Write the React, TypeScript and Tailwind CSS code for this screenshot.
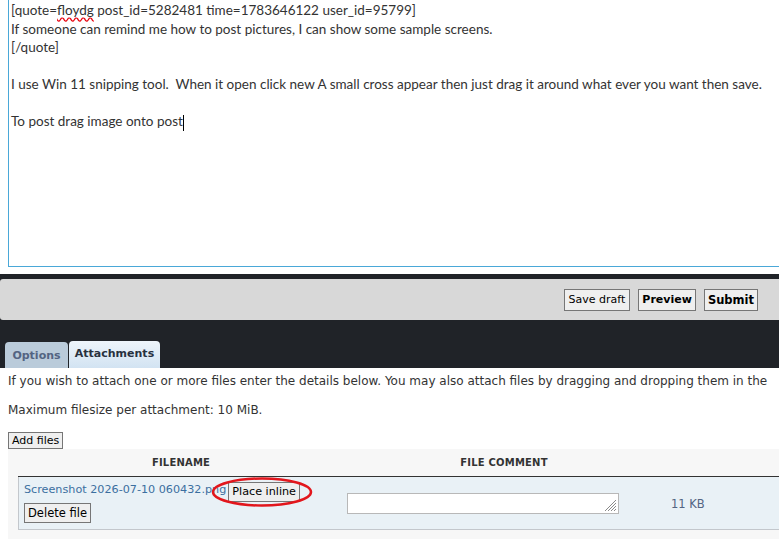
import React from 'react';

const editorFont = { fontFamily: 'Lato, "Liberation Sans", sans-serif' };
const uiFont = { fontFamily: '"DejaVu Sans", Verdana, sans-serif' };

function Btn({ children, bold = false, className = '' }: { children: React.ReactNode; bold?: boolean; className?: string }) {
    return (
        <button
            className={`border border-[#767676] bg-[#efefef] px-[3px] text-[11.5px] leading-[18px] text-black ${bold ? 'font-bold' : ''} ${className}`}
            style={uiFont}
        >
            {children}
        </button>
    );
}

export default function App() {
    return (
        <div className="w-[779px] h-[539px] overflow-hidden bg-white relative">
            {/* editor */}
            <div className="h-[274px] pl-[8px] pb-[7px]">
                <div
                    className="h-full border-l border-b border-[#4aa8d8] pl-[2px] pt-[1px] text-[13.5px] leading-[18.5px] text-[#333] whitespace-pre"
                    style={editorFont}
                >
                    <div>
                        [quote=<span className="underline decoration-wavy decoration-red-600 underline-offset-2">floydg</span> post_id=5282481 time=1783646122 user_id=95799]
                    </div>
                    <div>If someone can remind me how to post pictures, I can show some sample screens.</div>
                    <div>[/quote]</div>
                    <div>&nbsp;</div>
                    <div>I use Win 11 snipping tool.  When it open click new A small cross appear then just drag it around what ever you want then save.</div>
                    <div>&nbsp;</div>
                    <div>
                        To post drag image onto post<span className="inline-block w-px h-[16px] bg-black align-middle" />
                    </div>
                </div>
            </div>

            {/* toolbar */}
            <div className="bg-[#202328] pt-[5px] pb-[21px]">
                <div className="h-[41px] bg-[#d8d8d8] rounded-l-[3px] flex items-center justify-end gap-[8px] pr-[21px]">
                    <Btn className="!py-px !text-[11px] !px-[4px]">Save draft</Btn>
                    <Btn bold className="!py-px !text-[11px] !px-[3px]">Preview</Btn>
                    <Btn bold className="!py-px !text-[11.5px]">Submit</Btn>
                </div>
            </div>

            {/* tabs */}
            <div className="bg-[#202328] flex items-end gap-px pl-[5px] h-[27px]" style={uiFont}>
                <div className="h-[26px] w-[63px] rounded-t-[4px] bg-[#bacbda] flex items-center justify-center text-[11px] font-bold text-[#536482] pt-[2px]">
                    Options
                </div>
                <div className="h-[27px] w-[91px] rounded-t-[4px] bg-gradient-to-b from-[#eef5fb] to-[#d2e3f2] flex items-center justify-center text-[11px] font-bold text-[#28313f]">
                    Attachments
                </div>
            </div>

            {/* attachments panel */}
            <div className="px-[8px] text-[12px] text-[#333]" style={uiFont}>
                <p className="pt-[5px] leading-[17px] whitespace-nowrap">
                    If you wish to attach one or more files enter the details below. You may also attach files by dragging and dropping them in the
                </p>
                <p className="mt-[12px] leading-[17px]">Maximum filesize per attachment: 10 MiB.</p>
                <div className="mt-[12px]">
                    <Btn className="!text-[11px] !leading-[15px]">Add files</Btn>
                </div>
                <div className="bg-[#f7f7f7] px-[10px] pb-[10px] w-[800px]">
                    <div className="flex h-[28px] items-center border-b border-[#333] text-[10px] font-bold text-[#333] uppercase tracking-[0.2px]">
                        <div className="w-[324px] text-center pl-[2px]">Filename</div>
                        <div className="w-[324px] text-center">File comment</div>
                    </div>
                    <div className="flex bg-[#e9f1f6] border-l border-b border-[#c3c7cc] h-[53px]">
                        <div className="w-[320px] pl-[5px] pt-[4px]">
                            <div className="flex items-start">
                                <span className="text-[#3b6fa0] text-[11.2px] leading-[18px] whitespace-nowrap">Screenshot 2026-07-10 060432.png</span>
                                <span className="relative ml-[2px] mt-[1px]">
                                    <Btn className="!text-[11.2px] !leading-[18px]">Place inline</Btn>
                                    <svg
                                        className="absolute pointer-events-none"
                                        style={{ left: -18, top: -6 }}
                                        width="104"
                                        height="32"
                                        viewBox="0 0 104 32"
                                    >
                                        <ellipse cx="52" cy="16" rx="49" ry="13.5" fill="none" stroke="#e2161c" strokeWidth="2.5" />
                                    </svg>
                                </span>
                            </div>
                            <div className="mt-[1px]">
                                <Btn>Delete file</Btn>
                            </div>
                        </div>
                        <div className="w-[272px] ml-[8px] pt-[16px]">
                            <div className="relative h-[21px] bg-white border border-[#b8b8b8]">
                                <svg className="absolute right-[1px] bottom-[1px]" width="14" height="14" viewBox="0 0 14 14">
                                    <g stroke="#8a8a8a" strokeWidth="1">
                                        <line x1="13" y1="2" x2="2" y2="13" />
                                        <line x1="13" y1="5" x2="5" y2="13" />
                                        <line x1="13" y1="8" x2="8" y2="13" />
                                        <line x1="13" y1="11" x2="11" y2="13" />
                                    </g>
                                </svg>
                            </div>
                        </div>
                        <div className="ml-[52px] pt-[19px] text-[11.5px] text-[#536482]">11 KB</div>
                    </div>
                </div>
            </div>
        </div>
    );
}
